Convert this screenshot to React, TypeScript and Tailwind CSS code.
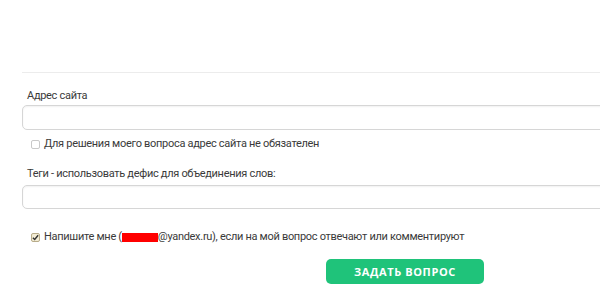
import React from 'react';

export default function App() {
  return (
    <div className="w-[600px] h-[302px] overflow-hidden bg-white text-[#3a3a3a] font-['Roboto',sans-serif]">
      <div className="pt-[72px] pl-[22px] w-[640px]">
        <div className="border-t border-[#ececec]" />

        <div className="mt-[15px] pl-[5px] text-[11px] tracking-[-0.3px] leading-4">Адрес сайта</div>
        <div className="mt-[1px] h-[25px] rounded-[5px] border border-[#d6d6d6] bg-white shadow-[inset_0_1px_2px_rgba(0,0,0,0.06)]" />

        <label className="mt-[7px] flex items-center h-[14px] pl-[9px] text-[11px] tracking-[-0.3px] leading-4">
          <span className="w-[9px] h-[9px] rounded-[2px] border border-[#c9c9c9] bg-white" />
          <span className="ml-[4px]">Для решения моего вопроса адрес сайта не обязателен</span>
        </label>

        <div className="mt-[15px] pl-[5px] text-[11px] tracking-[-0.3px] leading-4">Теги - использовать дефис для объединения слов:</div>
        <div className="mt-[3px] h-[24px] rounded-[5px] border border-[#d6d6d6] bg-white shadow-[inset_0_1px_2px_rgba(0,0,0,0.06)]" />

        <label className="mt-[21px] flex items-center h-[14px] pl-[9px] text-[11px] tracking-[-0.3px] leading-4">
          <span className="w-[9px] h-[9px] rounded-[2px] border border-[#b8ac8a] bg-[#f3ecd4] flex items-center justify-center">
            <svg width="7" height="7" viewBox="0 0 8 8">
              <path d="M1 4.2 L3.1 6.3 L7 1.5" fill="none" stroke="#333" strokeWidth="1.6" />
            </svg>
          </span>
          <span className="ml-[4px] flex items-center">
            Напишите мне (
            <span className="inline-block w-[36px] h-[9px] bg-[#ff0000]" />
            @yandex.ru), если на мой вопрос отвечают или комментируют
          </span>
        </label>

        <div className="mt-[15px] pl-[304px]">
          <button className="w-[158px] h-[25px] rounded-[5px] bg-[#1fc37a] text-white text-[11px] font-bold tracking-[0.6px] leading-none font-['Open_Sans',sans-serif]">
            ЗАДАТЬ ВОПРОС
          </button>
        </div>
      </div>
    </div>
  );
}
